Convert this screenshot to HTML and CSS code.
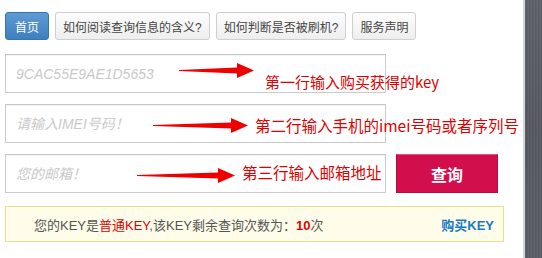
FILE: index.html
```html
<!DOCTYPE html>
<html lang="zh-CN">
<head>
<meta charset="utf-8">
<title>查询</title>
<link rel="stylesheet" href="styles.css">
</head>
<body>
<div class="page">
  <main class="main">
    <nav class="tabs">
      <a class="tab tab-active">首页</a>
      <a class="tab">如何阅读查询信息的含义?</a>
      <a class="tab">如何判断是否被刷机?</a>
      <a class="tab">服务声明</a>
    </nav>
    <form class="form">
      <div class="row">
        <input class="field" type="text" placeholder="9CAC55E9AE1D5653">
        <svg class="arrow arrow-1" viewBox="0 0 75 15" width="75" height="15"><polygon points="0,7 58,4.5 58,0 75,7.5 58,15 58,10.5 0,8" fill="#ee0000"/></svg>
        <span class="note note-1">第一行输入购买获得的key</span>
      </div>
      <div class="row">
        <input class="field" type="text" placeholder="请输入IMEI号码！">
        <svg class="arrow arrow-2" viewBox="0 0 95 15" width="95" height="15"><polygon points="0,7 78,4.5 78,0 95,7.5 78,15 78,10.5 0,8" fill="#ee0000"/></svg>
        <span class="note note-2">第二行输入手机的imei号码或者序列号</span>
      </div>
      <div class="row">
        <input class="field" type="text" placeholder="您的邮箱！">
        <svg class="arrow arrow-3" viewBox="0 0 98 15" width="98" height="15"><polygon points="0,7 81,4.5 81,0 98,7.5 81,15 81,10.5 0,8" fill="#ee0000"/></svg>
        <span class="note note-3">第三行输入邮箱地址</span>
        <button class="submit" type="button">查询</button>
      </div>
    </form>
    <div class="notice">
      <span class="notice-text">您的KEY是<span class="red">普通KEY</span>,该KEY剩余查询次数为：<b class="red">10</b>次</span>
      <a class="buy">购买KEY</a>
    </div>
  </main>
  <div class="divider"></div>
  <aside class="side"></aside>
</div>
</body>
</html>
```

FILE: styles.css
```css
html, body {
  margin: 0;
  padding: 0;
  background: #ffffff;
}
body {
  font-family: "Liberation Sans", "Noto Sans CJK SC", sans-serif;
  color: #555;
}
.page {
  display: flex;
  width: 542px;
  height: 258px;
  overflow: hidden;
}
.main {
  width: 518px;
  padding: 12px 0 0 5px;
  background: #fff;
}
.divider {
  width: 2px;
  background: #d4d4d4;
}
.side {
  flex: 1;
  background:
    repeating-linear-gradient(90deg, rgba(255,255,255,0.04) 0 1px, rgba(0,0,0,0.05) 1px 2px, transparent 2px 3px),
    linear-gradient(180deg, #5f626b 0%, #575a63 50%, #5c5f68 100%);
}
.tabs {
  display: flex;
  gap: 6px;
  height: 28px;
}
.tab {
  display: flex;
  align-items: center;
  height: 26px;
  padding: 0 7px;
  font-size: 12px;
  color: #444;
  border: 1px solid #cfcfcf;
  border-radius: 3px;
  background: linear-gradient(180deg, #fdfdfd 0%, #eeeeee 100%);
  white-space: nowrap;
}
.tab-active {
  padding: 0 9px;
  color: #fff;
  border-color: #3a74ad;
  background: linear-gradient(180deg, #5d9bd6 0%, #3f7fbe 100%);
}
.form {
  display: flex;
  flex-direction: column;
  gap: 11px;
  margin-top: 14px;
}
.row {
  position: relative;
  display: flex;
  height: 39px;
}
.field {
  box-sizing: border-box;
  width: 381px;
  height: 39px;
  margin: 0;
  padding: 0 10px;
  border: 1px solid #cccccc;
  border-top-color: #c4c4c4;
  box-shadow: inset 0 1px 1px rgba(0,0,0,0.05);
  font-family: "Liberation Sans", "Noto Sans CJK SC", sans-serif;
  font-size: 14px;
  background: #fff;
  outline: none;
}
.field::placeholder {
  color: #c9c9c9;
  font-style: italic;
}
.arrow {
  position: absolute;
}
.arrow-1 { left: 174px; top: 9px; }
.arrow-2 { left: 148px; top: 14px; }
.arrow-3 { left: 132px; top: 14px; }
.note {
  position: absolute;
  color: #e00000;
  font-family: "Noto Sans CJK SC", "Liberation Sans", sans-serif;
  white-space: nowrap;
  line-height: 20px;
}
.note-1 { left: 260px; top: 18px; font-size: 15px; }
.note-2 { left: 250px; top: 11px; font-size: 15.5px; }
.note-3 { left: 237px; top: 8px; font-size: 15.5px; }
.submit {
  box-sizing: border-box;
  width: 102px;
  height: 39px;
  margin-left: 10px;
  border: 1px solid #b80a40;
  border-top-color: #e0557e;
  background: #d20e4c;
  color: #fff;
  font-family: "Noto Sans CJK SC", sans-serif;
  font-size: 16px;
  font-weight: bold;
  padding: 0;
}
.notice {
  box-sizing: border-box;
  display: flex;
  align-items: center;
  justify-content: space-between;
  width: 499px;
  height: 36px;
  margin-top: 13px;
  padding: 0 9px 0 28px;
  border: 1px solid #e9e08c;
  background: #fffde9;
  font-size: 13px;
}
.notice-text {
  color: #555;
}
.red {
  color: #e00000;
}
b.red {
  font-weight: bold;
}
.buy {
  color: #1a7ac4;
  font-weight: bold;
}
```
